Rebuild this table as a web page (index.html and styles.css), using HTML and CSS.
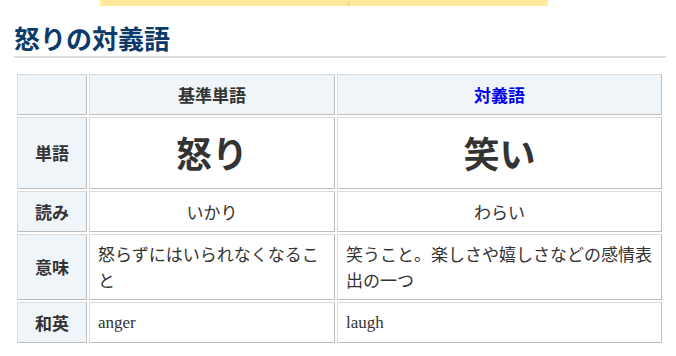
FILE: index.html
```html
<!DOCTYPE html>
<html lang="ja">
<head>
    <meta charset="UTF-8">
    <meta name="viewport" content="width=device-width, initial-scale=1.0">
    <title>怒りの対義語</title>
    <link rel="stylesheet" href="styles.css">
</head>
<body>
    <div class="banner"><span class="banner-mark"></span></div>
    <div class="article">
        <h2 class="section-title">怒りの対義語</h2>
        <table class="antonym-table">
            <colgroup>
                <col class="col-label">
                <col class="col-base">
                <col class="col-opposite">
            </colgroup>
            <tr>
                <th></th>
                <th>基準単語</th>
                <th><a href="#">対義語</a></th>
            </tr>
            <tr>
                <th>単語</th>
                <td class="word">怒り</td>
                <td class="word">笑い</td>
            </tr>
            <tr>
                <th>読み</th>
                <td class="reading">いかり</td>
                <td class="reading">わらい</td>
            </tr>
            <tr>
                <th>意味</th>
                <td class="meaning">怒らずにはいられなくなること</td>
                <td class="meaning">笑うこと。楽しさや嬉しさなどの感情表出の一つ</td>
            </tr>
            <tr>
                <th>和英</th>
                <td class="english">anger</td>
                <td class="english">laugh</td>
            </tr>
        </table>
    </div>
</body>
</html>
```

FILE: styles.css
```css
body {
    margin: 0;
    font-family: "Noto Sans CJK JP", "Noto Sans", sans-serif;
    color: #333;
    background-color: #fff;
}
.banner {
    display: flex;
    align-items: flex-end;
    width: 448px;
    height: 6px;
    margin-left: 100px;
    padding-left: 247px;
    box-sizing: border-box;
    background-color: #ffe99a;
}
.banner-mark {
    width: 3px;
    height: 4px;
    border-radius: 1px;
    background-color: #f9d0a4;
}
.article {
    padding: 0 10px 0 14px;
}
.section-title {
    margin: 14px 0 0;
    font-size: 26px;
    line-height: 36px;
    font-weight: bold;
    color: #0d3b69;
    border-bottom: 2px solid #dcdcdc;
}
.antonym-table {
    margin: 14px 0 0 1px;
    width: 649px;
    border-collapse: separate;
    border-spacing: 2px;
    table-layout: fixed;
    font-size: 17px;
    line-height: 1.6;
}
.col-label {
    width: 70px;
}
.col-base {
    width: 246px;
}
.antonym-table th,
.antonym-table td {
    padding: 6px 8px;
    border: 1px solid #dadada;
    border-right-color: #bdbdbd;
    border-bottom-color: #bdbdbd;
}
.antonym-table th {
    background-color: #f0f5fa;
    font-weight: bold;
    text-align: center;
}
.antonym-table th a {
    color: #0000f0;
    text-decoration: none;
}
.word {
    font-size: 36px;
    font-weight: bold;
    text-align: center;
}
.reading {
    text-align: center;
}
.meaning {
    padding-top: 5px;
    padding-bottom: 5px;
    line-height: 26px;
}
.english {
    padding-top: 7px;
    font-family: "Liberation Serif", serif;
}
```
